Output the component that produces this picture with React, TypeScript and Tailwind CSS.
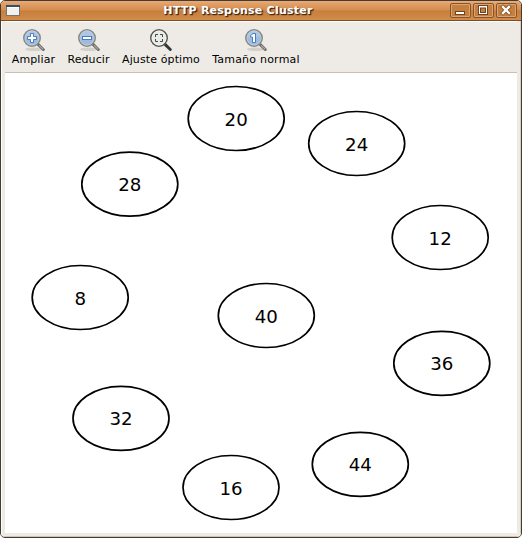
import React from "react";

type IconKind = "in" | "out" | "fit" | "normal";

const tools: { label: string; kind: IconKind; width: string; tracking: string }[] = [
  { label: "Ampliar", kind: "in", width: "w-[43px]", tracking: "tracking-[0.1px]" },
  { label: "Reducir", kind: "out", width: "w-[43px]", tracking: "tracking-[0.1px]" },
  { label: "Ajuste óptimo", kind: "fit", width: "w-[78px]", tracking: "tracking-[0.12px]" },
  { label: "Tamaño normal", kind: "normal", width: "w-[88px]", tracking: "tracking-[0.22px]" },
];

const nodes = [
  { id: 20, x: 236.2, y: 118.5 },
  { id: 24, x: 356.7, y: 143.5 },
  { id: 28, x: 129.8, y: 184.2 },
  { id: 12, x: 440.2, y: 237.5 },
  { id: 8, x: 80.2, y: 297.5 },
  { id: 40, x: 266.3, y: 315.5 },
  { id: 36, x: 441.8, y: 363.3 },
  { id: 32, x: 121, y: 418.3 },
  { id: 44, x: 360.3, y: 464.3 },
  { id: 16, x: 231, y: 487.5 },
];

function Magnifier({ kind }: { kind: IconKind }) {
  const fit = kind === "fit";
  return (
    <svg width="24" height="24" viewBox="0 0 24 24" className="block" fill="none">
      {!fit && <ellipse cx="12" cy="21.3" rx="9" ry="1.8" fill="#77716a" opacity="0.22" />}
      <path d="M15.8 16.2L21.3 21.5" stroke={fit ? "#343936" : "#686a66"} strokeWidth="3" strokeLinecap="round" />
      {!fit && <path d="M17 17.2l4.2 4.1" stroke="#a5a6a2" strokeWidth="1.2" />}
      <circle cx="10" cy="10" r="8.2" fill={fit ? "#e9ebe8" : "#9dbbdf"} stroke={fit ? "#525753" : "#868986"} strokeWidth="1.6" />
      <circle cx="10" cy="10" r="7" stroke={fit ? "#f3f4f1" : "#c3cfda"} strokeWidth="0.8" />
      {!fit && <path d="M3.5 9a6.5 6.5 0 0 1 13-.5C12 8.5 9 12 3.5 9Z" fill="#c5d7eb" opacity="0.4" />}
      {kind === "in" && (
        <path d="M8.5 5.5h3v3h3v3h-3v3h-3v-3h-3v-3h3z" fill="#fff" stroke="#4a7dba" />
      )}
      {kind === "out" && <rect x="5.5" y="8.5" width="9" height="3" fill="#fff" stroke="#4a7dba" />}
      {kind === "normal" && (
        <path d="M6.5 7.5l2.7-2h2.3v9h-3V9h-2z" fill="#fff" stroke="#4a7dba" />
      )}
      {fit && (
        <path d="M6.5 9V6.5H9M11 6.5h2.5V9M13.5 11v2.5H11M9 13.5H6.5V11" stroke="#444945" strokeWidth="1" />
      )}
    </svg>
  );
}

function WindowButton({ kind }: { kind: "min" | "max" | "close" }) {
  return (
    <button className="block h-[15px] w-[21px]">
      <svg width="21" height="15" viewBox="0 0 21 15" fill="none" className="block">
        <rect x="0.5" y="0.5" width="20" height="14" rx="1.5" fill="#c5803f" stroke="#855328" />
        <rect x="1.5" y="1.5" width="18" height="12" rx="0.5" stroke="#dda374" />
        {kind === "min" && (
          <>
            <rect x="5" y="8" width="10" height="4" fill="#6c4422" />
            <rect x="6" y="9" width="8" height="2" fill="#fff" />
          </>
        )}
        {kind === "max" && (
          <>
            <rect x="5" y="2" width="10" height="10" fill="#6c4422" />
            <rect x="6" y="3" width="8" height="8" fill="#fff" />
            <rect x="7" y="4.5" width="6" height="5.5" fill="#6c4422" />
            <rect x="8" y="5.5" width="4" height="3.5" fill="#c5803f" />
          </>
        )}
        {kind === "close" && (
          <>
            <path d="M7 4l6 6m0-6l-6 6" stroke="#855328" strokeWidth="4" strokeLinecap="square" />
            <path d="M7 4l6 6m0-6l-6 6" stroke="#fff" strokeWidth="2.3" strokeLinecap="square" />
          </>
        )}
      </svg>
    </button>
  );
}

export default function App() {
  return (
    <div className="h-[538px] w-[522px] overflow-hidden bg-white font-['DejaVu_Sans',sans-serif] text-black">
      <div className="flex h-full flex-col overflow-hidden rounded-[5px] border border-[#443b35] bg-[#eeebe6]">
        <header className="flex h-5 shrink-0 items-center border-b border-[#7c4c25] bg-[linear-gradient(#e7ad7c_0px,#e19e65_3px,#d58d4e_9px,#c77f3c_10px,#cc8542_15px,#d28d4b_19px)] pl-[5px] pr-1">
          <svg width="14" height="11" viewBox="0 0 14 11" className="block shrink-0">
            <rect x="0.5" y="0.5" width="13" height="10" fill="#f1f1f0" stroke="#77736e" />
            <rect width="14" height="2" fill="#304f75" />
            <rect x="1" y="2" width="12" height="1" fill="#fff" />
          </svg>
          <h1 className="flex-1 pl-[6px] text-center text-[11px] font-bold leading-4 tracking-[0.24px] text-white [text-shadow:1px_1px_1px_#3c2817,1px_1px_1px_#4c301b]">
            HTTP Response Cluster
          </h1>
          <div className="flex gap-[2px]">
            <WindowButton kind="min" />
            <WindowButton kind="max" />
            <WindowButton kind="close" />
          </div>
        </header>
        <main className="flex min-h-0 flex-1 flex-col border-b border-r border-b-[#cfc4b7] border-r-[#d8cec4] border-l border-l-white px-[3px] pb-[3px]">
          <nav className="flex h-[52px] shrink-0 gap-3 border-b border-t border-b-[#cbbfb2] border-t-white pl-[7px] pt-[6px]">
            {tools.map((tool) => (
              <button key={tool.kind} className={`flex shrink-0 flex-col items-center ${tool.width}`}>
                <Magnifier kind={tool.kind} />
                <span className={`whitespace-nowrap text-[11px] leading-4 ${tool.tracking}`}>{tool.label}</span>
              </button>
            ))}
          </nav>
          <svg width="512" height="460" viewBox="5 73 512 460" className="block shrink-0 bg-white">
            {nodes.map((node) => (
              <g key={node.id}>
                <ellipse cx={node.x} cy={node.y} rx="48" ry="32" fill="white" stroke="black" strokeWidth="1.7" />
                <text x={node.x} y={Math.round(node.y + 7)} textAnchor="middle" fontSize="18.2" fill="black">
                  {node.id}
                </text>
              </g>
            ))}
          </svg>
        </main>
      </div>
    </div>
  );
}
